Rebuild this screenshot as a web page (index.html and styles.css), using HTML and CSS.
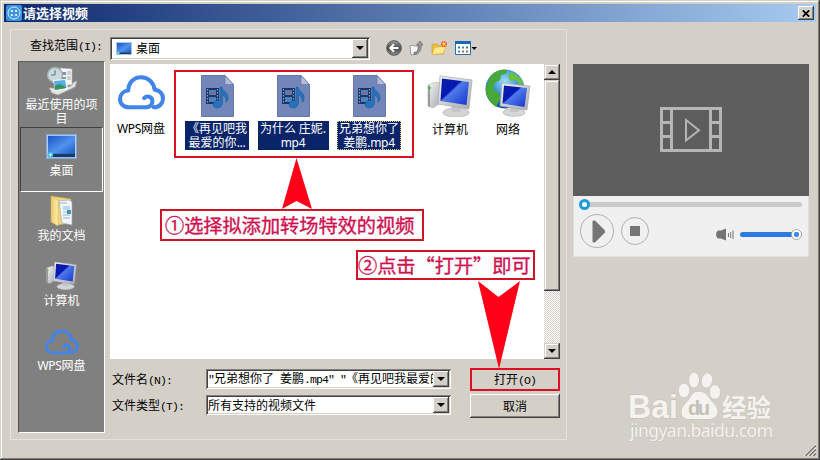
FILE: index.html
```html
<!DOCTYPE html>
<html lang="zh-CN">
<head>
  <meta charset="UTF-8" />
  <title>请选择视频</title>
  <link rel="stylesheet" href="styles.css">
</head>
<body>
  <!-- shared icons -->
  <svg class="defs" width="0" height="0">
    <defs>
      <linearGradient id="screen" x1="0" y1="0" x2="1" y2="1">
        <stop offset="0" stop-color="#0a1fa8" /><stop offset=".4" stop-color="#0618b4" />
        <stop offset=".45" stop-color="#4f7be8" /><stop offset="1" stop-color="#1233d0" />
      </linearGradient>
      <linearGradient id="desk" x1="0" y1="0" x2="1" y2="1">
        <stop offset="0" stop-color="#1a55c4" /><stop offset=".55" stop-color="#4f93ee" /><stop offset="1" stop-color="#1c58bd" />
      </linearGradient>
      <linearGradient id="silver" x1="0" y1="0" x2="1" y2="1">
        <stop offset="0" stop-color="#f6f6f6" /><stop offset="1" stop-color="#a9abae" />
      </linearGradient>
      <linearGradient id="folder" x1="0" y1="0" x2="1" y2="0">
        <stop offset="0" stop-color="#e9c765" /><stop offset="1" stop-color="#fff0ae" />
      </linearGradient>
      <radialGradient id="globe" cx=".5" cy=".3" r=".75">
        <stop offset="0" stop-color="#9fe0fa" /><stop offset=".5" stop-color="#2e8bd8" /><stop offset="1" stop-color="#0b3c8c" />
      </radialGradient>
      <linearGradient id="round" x1="0" y1="0" x2="0" y2="1">
        <stop offset="0" stop-color="#9a9a9a" /><stop offset=".5" stop-color="#4c4c4c" /><stop offset="1" stop-color="#8a8a8a" />
      </linearGradient>
    </defs>
    <symbol id="i-cloud" viewBox="0 0 46 34">
      <path d="M28 31.500c4.500-1 6-4 5.600-7-.6-3.600-5.400-4.800-8-2M11 31.500h17M11 31.500C5.500 31.500 2 28 2 23.500c0-4.800 3.500-8 8-8.400C10 7.500 15.500 2 22.500 2S35 7 35.800 14.200C41 15 44 18.500 44 23c0 4.500-3.500 8.500-9 8.500" fill="none" stroke="#4285e8" stroke-width="4" stroke-linecap="round" stroke-linejoin="round" />
    </symbol>
    <symbol id="i-pc" viewBox="0 0 46 42">
      <path d="M1 10l8-3 4 1v20l-7 5-5-2z" fill="url(#silver)" stroke="#b5b5b5" stroke-width=".6" />
      <path d="M1 10l2 1v21l-2-1z" fill="#999" /><circle cx="2.600" cy="13" r="1.300" fill="#35c035" />
      <ellipse cx="29" cy="37.500" rx="13" ry="4.500" fill="#d2d4d6" stroke="#aaa" stroke-width=".6" />
      <path d="M24 29l9 2 1 6h-9z" fill="#c3c5c8" />
      <path d="M13 1l32 4-3 29-31-5z" fill="url(#silver)" stroke="#a4a6aa" stroke-width=".7" />
      <path d="M15 3.500l27 3.500-2.500 23-26-4z" fill="url(#screen)" />
    </symbol>
    <symbol id="i-file" viewBox="0 0 33 42">
      <path d="M.5.500h23.500l8.500 9v32H.5z" fill="#7286b9" stroke="#6577a8" />
      <path d="M24 .5V9.500h8.500z" fill="#b2bddd" stroke="#6577a8" stroke-width=".7" />
      <path d="M5 13h13v16H5z" fill="#1c3566" />
      <path d="M8 15h7v5H8zM8 22h7v5H8z" fill="#4c83bd" /><path d="M11 16l3 3h-4z" fill="#c0506c" />
      <path d="M6.500 14v15M16.500 14v15" stroke="#8ca0d0" stroke-width="1.200" stroke-dasharray="1.500 1.500" />
      <path d="M19 12h2.200c.3 4 6 5.500 6 10.500 0 2-1 4-2.200 5 .6-4-1-6.500-3.500-7.500v8c0 3-2.500 5-5.500 5-2.600 0-4-1.600-4-3.400 0-3.200 4-5 7-3.900z" fill="#2871ba" stroke="#1c5899" stroke-width=".5" />
    </symbol>
    <symbol id="i-desktop" viewBox="0 0 32 27" preserveAspectRatio="none">
      <path d="M.5.500h31v26H.5z" fill="#b9d3f2" stroke="#7fa6dc" />
      <path d="M2 2h28v20H2z" fill="url(#desk)" /><path d="M2 21.500h28V25H2z" fill="#173b66" />
      <circle cx="4.500" cy="22.500" r="3" fill="#43bfe0" /><path d="M3 22.500h3M4.500 21v3" stroke="#fff" stroke-width=".8" />
    </symbol>
  </svg>

  <div class="window">
    <div class="titlebar">
      <svg class="app-icon" viewBox="0 0 16 16">
        <rect width="16" height="16" rx="2" fill="#3b93dd" />
        <circle cx="8" cy="8" r="6" fill="none" stroke="#d8efff" stroke-width="1" />
        <circle cx="5.900" cy="5.900" r="1.200" fill="#d8efff" /><circle cx="10.100" cy="5.900" r="1.200" fill="#d8efff" />
        <circle cx="5.900" cy="10.100" r="1.200" fill="#d8efff" /><circle cx="10.100" cy="10.100" r="1.200" fill="#d8efff" />
      </svg>
      <span class="title">请选择视频</span>
      <button class="close"><svg width="8" height="7" viewBox="0 0 8 7"><path d="M.8.300l6.400 6.400M7.200.3L.8 6.700" stroke="#000" stroke-width="1.700" /></svg></button>
    </div>

    <div class="content">
      <div class="group">
        <div class="look-in">
          <label>查找范围<span class="half">(I):</span></label>
          <div class="combo combo-big">
            <svg class="combo-icon" width="16" height="13"><use href="#i-desktop" /></svg>
            <span class="combo-text">桌面</span>
            <button class="drop"></button>
          </div>
          <div class="tools">
            <svg width="16" height="16" viewBox="0 0 16 16">
              <circle cx="8" cy="8" r="7.400" fill="url(#round)" stroke="#555" stroke-width=".8" />
              <path d="M12.500 8H4.500M8 4.300L4.300 8 8 11.700" fill="none" stroke="#fff" stroke-width="2" />
            </svg>
            <svg width="15" height="16" viewBox="0 0 15 16">
              <path d="M1 6l3-1 1 1h4v8l-7 1z" fill="#f4f4f4" stroke="#888" stroke-width=".8" />
              <path d="M5 12.500c4-1 5-3.500 4.600-7.500H7.500L11 1l3 4h-1.800c.4 5-2 8.500-7.200 9.500z" fill="#999" stroke="#555" stroke-width=".6" />
            </svg>
            <svg width="17" height="16" viewBox="0 0 17 16">
              <path d="M1 4h5l1 1.500h6V14H1z" fill="#e8bd43" stroke="#c99a2c" stroke-width=".6" />
              <path d="M3.500 7.500L15 6l-2.500 7.500L1.200 14.500z" fill="#fde991" stroke="#d9ac3a" stroke-width=".6" />
              <circle cx="13" cy="4" r="2.300" fill="#ffd24a" stroke="#e85022" stroke-width="1.600" stroke-dasharray="1.300 .6" />
            </svg>
            <svg width="24" height="14" viewBox="0 0 24 14">
              <path d="M.5.500h15v13H.5z" fill="#fff" stroke="#286bb5" /><path d="M0 0h16v3H0z" fill="#1e67b8" />
              <path d="M3 5.500h2v2H3zM11 5.500h2v2h-2z" fill="#3d7c58" /><path d="M7 5.500h2v2H7zM3 9.500h2v2H3z" fill="#4784cc" /><path d="M7 9.500h2v2H7zM11 9.500h2v2h-2z" fill="#94733e" />
              <path d="M16.500 6h5.500l-2.750 3z" fill="#000" />
            </svg>
          </div>
        </div>

        <div class="main">
          <div class="places">
            <div class="place place-recent">
              <svg width="32" height="30" viewBox="0 0 32 30">
                <path d="M14 2l12 1v16H14z" fill="#f5f5f3" stroke="#bbb" stroke-width=".6" /><path d="M16 6h4v3h-4zM16 11h4v3h-4z" fill="#7794b5" /><path d="M21 6h4M21 8h4M21 11h4M21 13h4" stroke="#999" stroke-width=".8" />
                <circle cx="9" cy="9" r="7.500" fill="#cbdadd" stroke="#a0adb0" stroke-width="1.300" /><path d="M9 4v5H5" fill="none" stroke="#577" stroke-width="1" />
                <path d="M3 22l3 5 6 2 17-8 2-6-3 1-3 4-13 4-5-2z" fill="#e3e3e1" stroke="#aaa" stroke-width=".7" />
                <path d="M7 14l13-1 2 10-13 2z" fill="#fff" /><path d="M8 15l11-1 1.500 8-11.500 2z" fill="#57aee0" /><path d="M8.500 20l5-2 6.500 3v1L9 24z" fill="#35945c" />
              </svg>
              <span>最近使用的项目</span>
            </div>
            <div class="place active">
              <svg width="31" height="25"><use href="#i-desktop" /></svg>
              <span>桌面</span>
            </div>
            <div class="place place-docs">
              <svg width="24" height="32" viewBox="0 0 24 32">
                <path d="M1 1l20 3v24L8 30z" fill="#f0d37a" stroke="#c9a548" stroke-width=".5" />
                <path d="M9 6l10-1 3 2v23l-10-2z" fill="#f1f6fb" stroke="#9aa9b8" stroke-width=".6" />
                <path d="M10 8h7M13 12h7M13 14h7M13 17h7M13 20h7M13 23h7" stroke="#8ab4cf" stroke-width="1" /><path d="M17 15h4v4h-4z" fill="#4593ae" />
                <path d="M1 1l7 4v26l-7-4z" fill="url(#folder)" stroke="#d2b053" stroke-width=".5" />
              </svg>
              <span>我的文档</span>
            </div>
            <div class="place place-pc">
              <svg width="31" height="29"><use href="#i-pc" /></svg>
              <span>计算机</span>
            </div>
            <div class="place place-wps">
              <svg width="34" height="26"><use href="#i-cloud" /></svg>
              <span><b class="wps">WPS</b>网盘</span>
            </div>
          </div>

          <div class="right">
            <div class="list">
              <div class="files">
                <div class="file file-wps">
                  <svg width="47" height="35"><use href="#i-cloud" /></svg>
                  <span><b class="wps">WPS</b>网盘</span>
                </div>
                <div class="picked">
                  <div class="file selected">
                    <svg width="33" height="42"><use href="#i-file" /></svg>
                    <span>《再见吧我<br>最爱的你<b>...</b></span>
                  </div>
                  <div class="file selected wide">
                    <svg width="33" height="42"><use href="#i-file" /></svg>
                    <span>为什么 庄妮.<br><b>mp4</b></span>
                  </div>
                  <div class="file selected focus">
                    <svg width="33" height="42"><use href="#i-file" /></svg>
                    <span>兄弟想你了<br>姜鹏<b>.mp4</b></span>
                  </div>
                </div>
                <div class="file file-pc">
                  <svg width="46" height="42"><use href="#i-pc" /></svg>
                  <span>计算机</span>
                </div>
                <div class="file file-pc">
                  <svg width="46" height="48" viewBox="0 0 46 48">
                    <circle cx="20" cy="20" r="19.500" fill="url(#globe)" />
                    <path d="M5 8C9 2 16 0 22 1l-1 4-5 1-1 5-5 3-2 6 5 3 3 6-3 5-2 4C4 33 0 26 1 18z" fill="#45a838" />
                    <path d="M26 3c7 2 11 7 13 13l-5-1-3-4-6 1-2-5z" fill="#68c044" />
                    <ellipse cx="29" cy="43.500" rx="11" ry="3.800" fill="#d6d8da" stroke="#aaa" stroke-width=".6" />
                    <path d="M25 36h8l1 7h-9z" fill="#c3c5c8" />
                    <path d="M17 14l28 3-3 24-27-4z" fill="url(#silver)" stroke="#a4a6aa" stroke-width=".7" />
                    <path d="M19 16.500l23 2.500-2.500 19-22-3.500z" fill="url(#screen)" />
                  </svg>
                  <span>网络</span>
                </div>
              </div>
              <div class="scrollbar">
                <button class="arrow up"></button>
                <div class="thumb"></div>
                <button class="arrow"></button>
              </div>
            </div>

            <div class="form">
              <label>文件名<span class="half">(N):</span></label>
              <div class="combo">
                <span class="combo-text"><span class="half">"</span>兄弟想你了<span class="half"> </span>姜鹏<span class="half">.mp4" "</span>《再见吧我最爱的</span>
                <button class="drop"></button>
              </div>
              <button class="btn btn-open">打开<span class="half">(O)</span></button>
              <label>文件类型<span class="half">(T):</span></label>
              <div class="combo">
                <span class="combo-text">所有支持的视频文件</span>
                <button class="drop"></button>
              </div>
              <button class="btn">取消</button>
            </div>
          </div>
        </div>
      </div>

      <div class="player">
        <div class="screen">
          <svg width="62" height="46" viewBox="0 0 62 46" fill="none" stroke="#b5b5b5">
            <path d="M1.500 1.500h59v42h-59zM11.500 1v43M50.500 1v43M1 15.500h10M1 29.500h10M51 15.500h10M51 29.500h10" stroke-width="3" />
            <path d="M26 13v20.500L39 23.200z" stroke-width="2" />
          </svg>
        </div>
        <div class="controls">
          <div class="progress"><div class="knob"></div></div>
          <div class="buttons">
            <button class="round play"><svg width="14" height="23" viewBox="0 0 14 23"><path d="M.5 1.500Q.5.500 2 .5h1l10 10v2l-10 10H2q-1.500 0-1.500-1z" fill="#757575" /></svg></button>
            <button class="round stop"><i></i></button>
            <svg class="speaker" width="18" height="13" viewBox="0 0 18 13">
              <path d="M2 2.500h3L10 .5v12l-5-2H2Q0 9 0 6.500t2-4z" fill="#757575" /><path d="M12.500 5v4M14.700 4v6M17 2.500v8.500" stroke="#757575" />
            </svg>
            <div class="volume"><div class="vol-knob"></div></div>
          </div>
        </div>
      </div>
    </div>

    <svg class="grip" width="12" height="12" viewBox="0 0 12 12"><path d="M0 12L12 0M4 12l8-8M8 12l4-4" stroke="#fff" stroke-width="1" /><path d="M1.200 12L12 1.200M5.200 12L12 5.200M9.200 12L12 9.200" stroke="#77746e" stroke-width="1.500" /></svg>
  </div>

  <!-- tutorial notes -->
  <div class="note-frame"></div>
  <svg class="pointer pointer-up" width="30" height="51" viewBox="0 0 30 51"><path d="M14.500 0L30 51 14.500 43 0 51z" fill="#ff0018" /></svg>
  <div class="note note-one">①选择拟添加转场特效的视频</div>
  <div class="note note-two">②点击“打开”即可</div>
  <svg class="pointer pointer-down" width="42" height="88" viewBox="0 0 42 88"><path d="M0 0l20.500 16L42 0 21 88z" fill="#ff0018" /></svg>

  <svg class="watermark" width="160" height="80" viewBox="620 370 160 80">
    <g fill="#f5f3ef" stroke="#c2beb6" stroke-width=".8" paint-order="stroke">
      <text class="wm-bold" x="628" y="418" font-size="33" textLength="50" lengthAdjust="spacingAndGlyphs">Bai</text>
      <ellipse cx="684" cy="390.500" rx="5.300" ry="7" /><ellipse cx="694" cy="380" rx="5" ry="7.500" />
      <ellipse cx="707" cy="380.500" rx="5.300" ry="7.200" transform="rotate(12 707 380.500)" /><ellipse cx="715" cy="392" rx="5.300" ry="7" />
      <path d="M699 391.500c5 0 8 3 10.500 7 3 4.500 8.500 7.500 8 13.500-.5 5-4.500 7-9 7h-19c-5 0-8-2.500-8-7 0-6 5-9 8-13.500 2.500-4 4.500-7 9.500-7z" />
      <text class="wm-cjk" x="722" y="416.500" font-size="24.500">经验</text>
      <text class="wm-url" x="630" y="436.500" font-size="17.500" textLength="143">jingyan.baidu.com</text>
    </g>
    <text class="wm-bold" x="688" y="415" font-size="20" fill="#c3bfb7" textLength="22">du</text>
  </svg>
</body>
</html>
```
FILE: styles.css
```css
* {
  box-sizing: border-box;
}
body {
  margin: 0;
  width: 820px;
  height: 460px;
  overflow: hidden;
  position: relative;
  font-family: "Noto Sans CJK SC", sans-serif;
  font-size: 12px;
  line-height: 14px;
  color: #000;
}
button {
  font: inherit;
  padding: 0;
  border: none;
  background: #d4d0c8;
}
svg {
  display: block;
  flex: none;
}
b {
  font-weight: normal;
}
.defs {
  position: absolute;
}
.half {
  font-family: "Liberation Mono", monospace;
  font-size: 11.5px;
  letter-spacing: -0.9px;
  white-space: pre;
}
.wps, .selected b {
  font-family: "Noto Sans", sans-serif;
  letter-spacing: -0.3px;
}
.window {
  width: 820px;
  height: 460px;
  padding: 4px;
  background: #d4d0c8;
  box-shadow: inset -1px -1px #404040, inset 1px 1px #d4d0c8, inset -2px -2px #808080, inset 2px 2px #fff;
}

/* title bar */
.titlebar {
  display: flex;
  align-items: center;
  height: 18px;
  padding: 0 2px;
  background: linear-gradient(90deg, #0d2a6e, #a6caf0);
}
.app-icon {
  width: 16px;
  height: 16px;
}
.title {
  flex: 1;
  margin-left: 1px;
  color: #fff;
  font-size: 13px;
  font-weight: bold;
}
.close {
  display: flex;
  align-items: center;
  justify-content: center;
  width: 16px;
  height: 14px;
  box-shadow: inset -1px -1px #404040, inset 1px 1px #fff, inset -2px -2px #808080;
}

.content {
  display: flex;
  gap: 6px;
  padding: 7px 0 0 6px;
}
.group {
  width: 557px;
  height: 411px;
  border: 1px solid #e6e3dc;
}
.look-in {
  display: flex;
  align-items: center;
  height: 29px;
  padding: 7px 0 0 19px;
}
.look-in label {
  width: 80px;
  margin-top: -4px;
}

/* drop-down fields */
.combo {
  display: flex;
  align-items: center;
  width: 245px;
  height: 20px;
  padding: 2px;
  background: #fff;
  box-shadow: inset 1px 1px #808080, inset -1px -1px #fff, inset 2px 2px #404040, inset -2px -2px #d4d0c8;
}
.combo-big {
  width: 260px;
  height: 23px;
}
.combo-icon {
  margin: 0 3px 0 4px;
}
.combo-text {
  flex: 1;
  min-width: 0;
  margin-left: 1px;
  overflow: hidden;
  line-height: 18px;
  white-space: nowrap;
}
.drop {
  display: flex;
  align-items: center;
  justify-content: center;
  align-self: stretch;
  width: 16px;
  box-shadow: inset -1px -1px #404040, inset 1px 1px #fff, inset -2px -2px #808080;
}
.drop::after, .arrow::after {
  content: "";
  border: 4px solid transparent;
  border-top-color: #000;
  border-bottom: none;
}
.tools {
  display: flex;
  align-items: center;
  gap: 7px;
  margin-left: 16px;
}

.main {
  display: flex;
  gap: 5px;
  padding: 2px 0 0 7px;
}

/* places bar */
.places {
  width: 87px;
  height: 372px;
  padding: 1px;
  background: #808080;
  border: 1px solid #fff;
  border-top-color: #606060;
  border-left-color: #505050;
}
.place {
  display: flex;
  flex-direction: column;
  align-items: center;
  width: 83px;
  height: 65px;
  color: #fff;
  text-align: center;
}
.place-recent {
  height: 64px;
  padding-top: 3px;
}
.place-recent span {
  width: 74px;
  margin-top: 1px;
}
.active {
  gap: 4px;
  padding-top: 6px;
  border: 1px solid #fff;
  border-top-color: #404040;
  border-left-color: #404040;
}
.place-docs {
  gap: 1px;
  padding-top: 3px;
}
.place-pc {
  gap: 3px;
  padding-top: 4px;
}
.place-wps {
  gap: 3px;
  padding-top: 7px;
}

/* file list */
.right {
  padding-top: 3px;
}
.list {
  display: flex;
  width: 450px;
  height: 295px;
  background: #fff;
}
.files {
  display: flex;
  align-items: flex-start;
  width: 434px;
  padding-top: 6px;
}
.picked {
  display: flex;
  margin: 0 14px 0 7px;
}
.file {
  display: flex;
  flex-direction: column;
  align-items: center;
  justify-content: flex-end;
  width: 58px;
  height: 66px;
  text-align: center;
  white-space: nowrap;
}
.file-wps {
  width: 62px;
  gap: 11px;
}
.file-pc {
  gap: 5px;
  height: 66px;
}
.file.selected {
  width: 76px;
  height: 80px;
  gap: 4px;
}
.selected span {
  width: 64px;
  background: #0a246a;
  color: #fff;
}
.wide span {
  width: 71px;
}
.focus span {
  outline: 1px dotted #d8c880;
  outline-offset: -1px;
}
.scrollbar {
  display: flex;
  flex-direction: column;
  justify-content: space-between;
  width: 16px;
  background: repeating-conic-gradient(#fff 0 25%, #d4d0c8 0 50%) 0 0 / 2px 2px;
}
.arrow {
  display: flex;
  align-items: center;
  justify-content: center;
  height: 16px;
  box-shadow: inset -1px -1px #404040, inset 1px 1px #d4d0c8, inset -2px -2px #808080, inset 2px 2px #fff;
}
.up::after {
  transform: rotate(180deg);
}
.thumb {
  height: 211px;
  margin-bottom: auto;
  background: #d4d0c8;
  box-shadow: inset -1px -1px #404040, inset 1px 1px #d4d0c8, inset -2px -2px #808080, inset 2px 2px #fff;
}

/* file name and type */
.form {
  display: grid;
  grid-template-columns: 96px 264px 90px;
  grid-template-rows: 23px 24px;
  row-gap: 3px;
  align-items: center;
  margin-top: 9px;
}
.form label {
  padding-left: 2px;
}
.form .combo {
  margin-top: -2px;
}
.form .combo-text {
  margin-left: 0;
}
.btn {
  height: 24px;
  box-shadow: inset -1px -1px #404040, inset 1px 1px #fff, inset -2px -2px #808080;
}
.btn-open {
  height: 23px;
  border: 2px solid #dc0f24;
  box-shadow: none;
}

/* preview player */
.player {
  width: 236px;
  margin-top: 35px;
}
.screen {
  display: flex;
  justify-content: center;
  height: 132px;
  padding-top: 43px;
  background: #5d5d5d;
}
.controls {
  height: 61px;
  padding: 6px 6px 0 9px;
  background: #f0f0f0;
  border: 1px solid #e2e0dc;
  border-top: none;
}
.progress {
  display: flex;
  align-items: center;
  height: 5px;
  border-radius: 3px;
  background: #c9cacc;
}
.knob {
  width: 11px;
  height: 11px;
  margin-left: -4px;
  border: 3px solid #1b9bd7;
  border-radius: 50%;
  background: #fff;
}
.buttons {
  display: flex;
  align-items: center;
  margin: 7px 0 0 -3px;
}
.round {
  display: flex;
  align-items: center;
  justify-content: center;
  border: 1px solid #b0b0b0;
  border-radius: 50%;
  background: #f0f0f0;
}
.play {
  width: 34px;
  height: 34px;
  padding-left: 3px;
}
.stop {
  width: 28px;
  height: 28px;
  margin-left: 7px;
}
.stop i {
  width: 10px;
  height: 10px;
  background: #757575;
}
.speaker {
  margin: 6px 0 0 67px;
}
.volume {
  display: flex;
  align-items: center;
  justify-content: flex-end;
  width: 62px;
  height: 5px;
  margin: 7px 0 0 6px;
  border-radius: 3px;
  background: #2c7be0;
}
.vol-knob {
  width: 11px;
  height: 11px;
  border: 1px solid #a9a9a9;
  border-radius: 50%;
  background: radial-gradient(#3f8fe6 0 2.5px, #fff 3px);
}
.grip {
  position: absolute;
  right: 4px;
  bottom: 4px;
}

/* notes drawn over the dialog */
.note-frame {
  position: absolute;
  left: 174px;
  top: 70px;
  width: 240px;
  height: 88px;
  border: 2px solid #dc0f24;
}
.note {
  position: absolute;
  display: flex;
  align-items: center;
  border: 2px solid #cf1428;
  background: #fbfdfe;
  color: #d0104e;
  font-size: 19.2px;
  line-height: 20px;
  white-space: nowrap;
  -webkit-text-stroke: 0.35px #d0104e;
}
.note-one {
  left: 160px;
  top: 209px;
  width: 264px;
  height: 32px;
  padding-left: 3px;
}
.note-two {
  left: 356px;
  top: 250px;
  width: 179px;
  height: 30px;
}
.pointer {
  position: absolute;
}
.pointer-up {
  left: 282px;
  top: 158px;
}
.pointer-down {
  left: 478px;
  top: 281px;
}
.watermark {
  position: absolute;
  left: 620px;
  top: 370px;
}
.wm-bold {
  font-family: "Liberation Sans", sans-serif;
  font-weight: bold;
}
.wm-cjk {
  font-weight: bold;
}
.wm-url {
  font-family: "Noto Sans", sans-serif;
}
```
